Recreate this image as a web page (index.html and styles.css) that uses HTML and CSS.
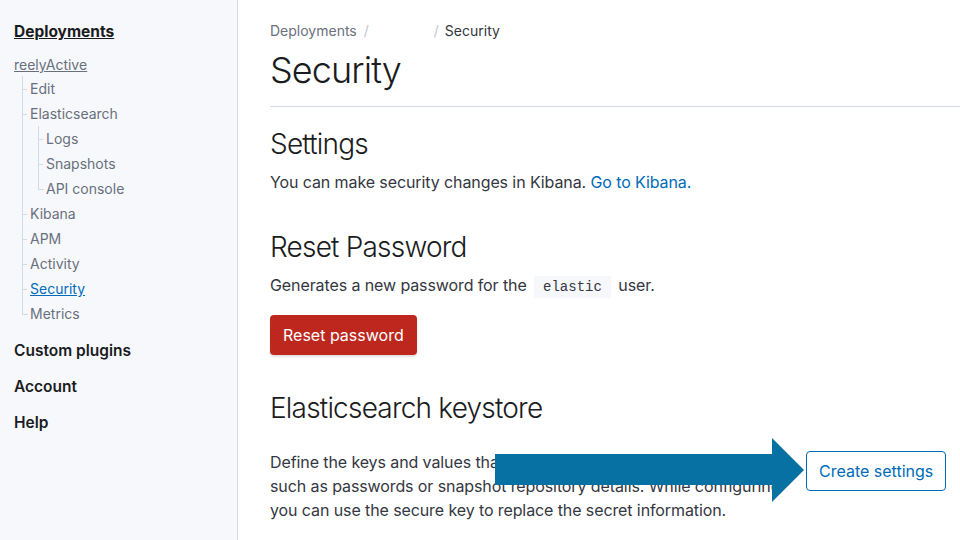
FILE: index.html
```html
<!DOCTYPE html>
<html lang="en">
<head>
<meta charset="utf-8">
<title>Security</title>
<link rel="stylesheet" href="styles.css">
</head>
<body>
<div class="app">
  <nav class="sidebar">
    <a class="nav-top" href="#">Deployments</a>
    <a class="nav-deploy" href="#">reelyActive</a>
    <ul class="tree">
      <li><a href="#">Edit</a></li>
      <li><a href="#">Elasticsearch</a>
        <ul class="tree sub">
          <li><a href="#">Logs</a></li>
          <li><a href="#">Snapshots</a></li>
          <li><a href="#">API console</a></li>
        </ul>
      </li>
      <li><a href="#">Kibana</a></li>
      <li><a href="#">APM</a></li>
      <li><a href="#">Activity</a></li>
      <li><a class="active" href="#">Security</a></li>
      <li><a href="#">Metrics</a></li>
    </ul>
    <a class="nav-section first" href="#">Custom plugins</a>
    <a class="nav-section" href="#">Account</a>
    <a class="nav-section" href="#">Help</a>
  </nav>
  <main class="main">
    <div class="crumbs">
      <span class="crumb">Deployments</span>
      <span class="sep">/</span>
      <span class="crumb hidden-name"></span>
      <span class="sep">/</span>
      <span class="crumb current">Security</span>
    </div>
    <h1 class="page-title">Security</h1>
    <hr class="rule">
    <section class="block">
      <h2>Settings</h2>
      <p>You can make security changes in Kibana. <a class="link" href="#">Go to Kibana.</a></p>
    </section>
    <section class="block">
      <h2>Reset Password</h2>
      <p>Generates a new password for the <code>elastic</code> user.</p>
      <button class="btn-danger">Reset password</button>
    </section>
    <section class="block">
      <h2>Elasticsearch keystore</h2>
      <div class="keystore-row">
        <p class="keystore-text">Define the keys and values that Elasticsearch stores securely,<br>such as passwords or snapshot repository details. While configuring<br>you can use the secure key to replace the secret information.</p>
        <button class="btn-outline">Create settings</button>
      </div>
    </section>
  </main>
</div>
<svg class="arrow" width="312" height="66" viewBox="0 0 312 66" aria-hidden="true">
  <path d="M0 16 H277 V0 L309 32 L277 64 V47 H0 Z" fill="#0771a3"/>
</svg>
</body>
</html>
```
FILE: styles.css
```css
* { box-sizing: border-box; }
html, body { margin: 0; padding: 0; }
body {
  font-family: Inter, "Noto Sans", sans-serif;
  color: #343741;
  background: #fff;
  width: 960px;
  height: 540px;
  overflow: hidden;
  position: relative;
}
.app { display: flex; height: 540px; }

.sidebar {
  width: 238px;
  flex: none;
  background: #f7f8fc;
  border-right: 1px solid #d3dae6;
  padding: 21px 0 0 14px;
  display: flex;
  flex-direction: column;
  align-items: flex-start;
}
.sidebar a { text-decoration: none; }
.nav-top {
  font-size: 15.5px;
  font-weight: 700;
  color: #1a1c21;
  text-decoration: underline !important;
  line-height: 22px;
  margin-bottom: 10px;
}
.nav-deploy {
  font-size: 14px;
  color: #69707d;
  text-decoration: underline !important;
  line-height: 23px;
}
.tree {
  list-style: none;
  margin: 0;
  padding: 0 0 0 8px;
  align-self: stretch;
}
.tree > li {
  position: relative;
  padding-left: 7px;
  border-left: 1px solid #d3dae6;
}
.tree > li:last-child { border-left-color: transparent; }
.tree > li::before {
  content: "";
  position: absolute;
  left: -1px;
  top: 0;
  width: 5px;
  height: 13px;
  border-bottom: 1px solid #d3dae6;
}
.tree > li:last-child::before { border-left: 1px solid #d3dae6; }
.tree a {
  display: block;
  font-size: 14px;
  line-height: 25px;
  color: #69707d;
}
.tree.sub { padding-left: 8px; }
.tree a.active { color: #006bb8; text-decoration: underline; }
.nav-section {
  font-size: 15.5px;
  font-weight: 600;
  color: #1a1c21;
  line-height: 22px;
  margin-bottom: 14px;
}
.nav-section.first { margin-top: 14px; }

.main {
  flex: 1;
  padding: 21px 0 0 32px;
  min-width: 0;
}
.crumbs {
  display: flex;
  align-items: center;
  font-size: 14px;
  line-height: 20px;
  color: #69707d;
}
.sep { color: #c2c6cd; margin: 0 6px 0 7px; }
.hidden-name { width: 52px; }
.current { color: #343741; }
.page-title {
  font-size: 36px;
  font-weight: 300;
  line-height: 44px;
  margin: 7px 0 0;
  color: #1a1c21;
  letter-spacing: -0.9px;
}
.rule {
  border: 0;
  border-top: 1px solid #d3dae6;
  margin: 14px 0 0;
}
.block h2 {
  font-size: 28px;
  font-weight: 300;
  line-height: 36px;
  margin: 0;
  color: #1a1c21;
  letter-spacing: -0.8px;
}
.block:nth-of-type(1) { padding-top: 19px; }
.block:nth-of-type(2) { padding-top: 35px; }
.block:nth-of-type(3) { padding-top: 35px; }
.block p {
  margin: 8px 0 0;
  font-size: 16px;
  line-height: 24px;
  letter-spacing: -0.1px;
}
.link { color: #006bb8; text-decoration: none; }
code {
  font-family: "Liberation Mono", "DejaVu Sans Mono", monospace;
  font-size: 14px;
  background: #f5f7fa;
  padding: 3px 9px;
  margin: 0 3px;
  color: #343741;
  letter-spacing: 0;
}
.btn-danger {
  margin-top: 16px;
  height: 40px;
  padding: 0 13px;
  background: #bd271e;
  color: #fff;
  border: 0;
  border-radius: 4px;
  font-family: inherit;
  font-size: 16px;
  box-shadow: 0 2px 2px rgba(0,0,0,0.12);
}
.keystore-row {
  display: flex;
  align-items: flex-start;
  gap: 16px;
  margin-top: 24px;
}
.block p.keystore-text { width: 520px; margin: 0; flex: none; }
.btn-outline {
  height: 40px;
  margin-top: 1px;
  padding: 0 12px;
  background: #fff;
  color: #006bb8;
  border: 1px solid #006bb8;
  border-radius: 4px;
  font-family: inherit;
  font-size: 16px;
  flex: none;
}
.arrow {
  position: absolute;
  left: 495px;
  top: 438px;
}
```
